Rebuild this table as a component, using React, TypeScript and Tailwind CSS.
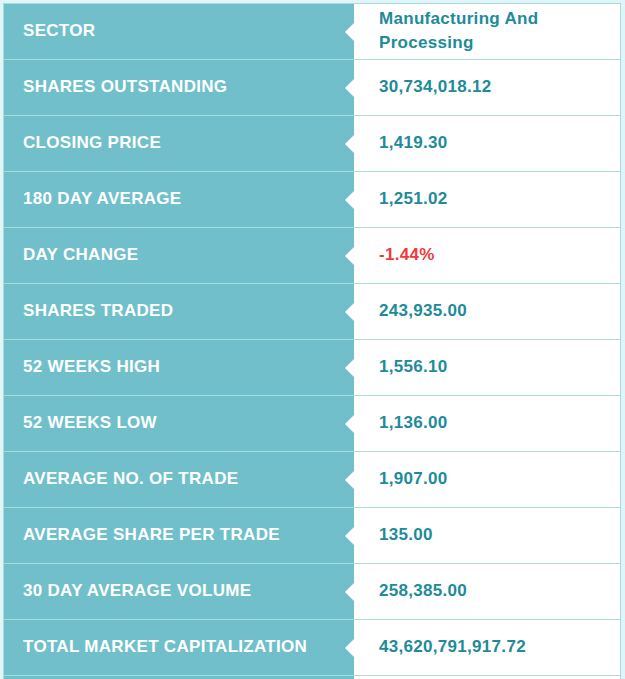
const rows: { label: string; value: string; negative?: boolean }[] = [
  { label: "SECTOR", value: "Manufacturing And Processing" },
  { label: "SHARES OUTSTANDING", value: "30,734,018.12" },
  { label: "CLOSING PRICE", value: "1,419.30" },
  { label: "180 DAY AVERAGE", value: "1,251.02" },
  { label: "DAY CHANGE", value: "-1.44%", negative: true },
  { label: "SHARES TRADED", value: "243,935.00" },
  { label: "52 WEEKS HIGH", value: "1,556.10" },
  { label: "52 WEEKS LOW", value: "1,136.00" },
  { label: "AVERAGE NO. OF TRADE", value: "1,907.00" },
  { label: "AVERAGE SHARE PER TRADE", value: "135.00" },
  { label: "30 DAY AVERAGE VOLUME", value: "258,385.00" },
  { label: "TOTAL MARKET CAPITALIZATION", value: "43,620,791,917.72" },
  { label: "", value: "" },
]

function Notch() {
  return (
    <svg
      className="absolute right-0 top-1/2 -translate-y-1/2"
      width="9"
      height="18"
      viewBox="0 0 9 18"
    >
      <polygon points="9,0 0,9 9,18" fill="#ffffff" />
    </svg>
  )
}

export default function App() {
  return (
    <div className="h-screen w-full overflow-hidden bg-[#e0f5fa] pl-[3px] pt-[3px] font-['Liberation_Sans',Arial,sans-serif]">
      <div className="w-[618px] border-l border-t border-r border-[#a8dcd4] bg-white">
        {rows.map((row, i) => (
          <div key={i} className="flex h-[56px] border-b border-[#a8dcd4]">
            <div className="relative flex w-[350px] shrink-0 items-center bg-[#70bfca] pb-[2px] pl-[19px]">
              <span className="text-[17px] font-bold tracking-[0.3px] text-white">{row.label}</span>
              <Notch />
            </div>
            <div className="flex flex-1 items-center pb-[2px] pl-[25px] pr-[20px]">
              <span
                className={
                  "text-[17px] font-bold leading-[24px] tracking-[0.3px] " +
                  (row.negative ? "text-[#f23a3a]" : "text-[#1d8b9a]")
                }
              >
                {row.value}
              </span>
            </div>
          </div>
        ))}
      </div>
    </div>
  )
}
